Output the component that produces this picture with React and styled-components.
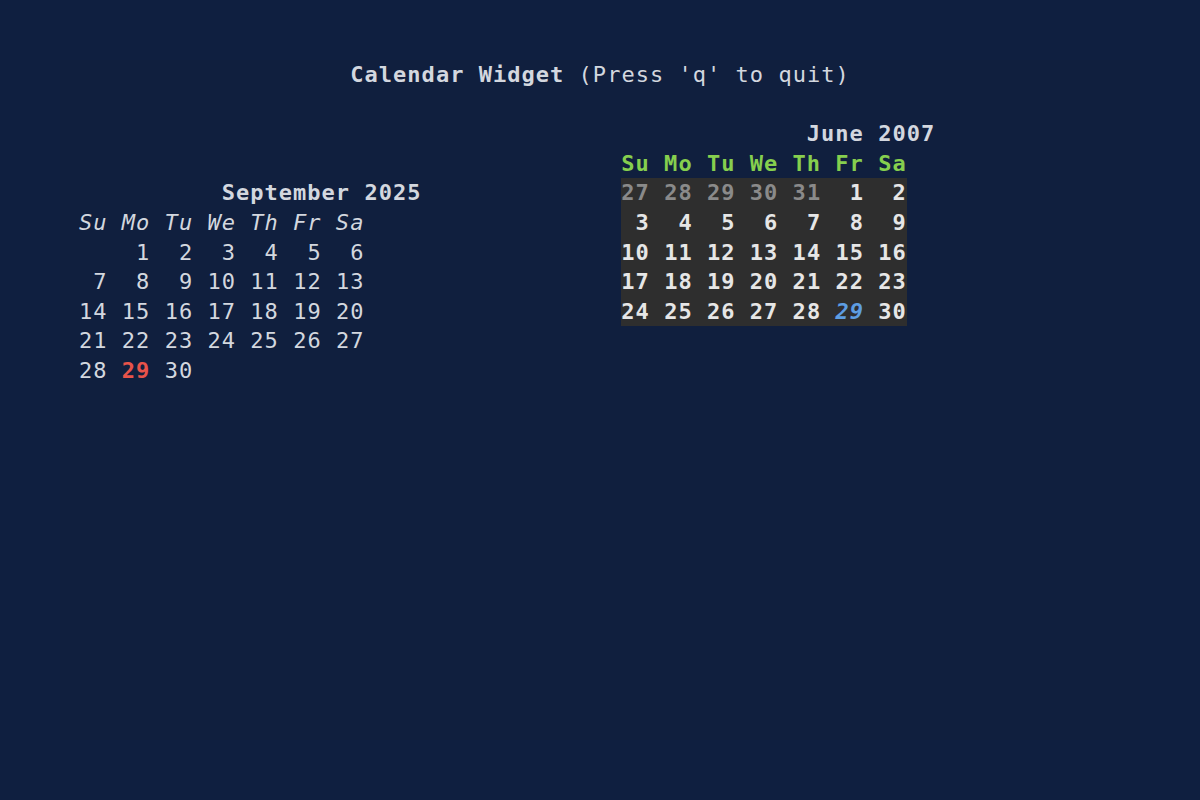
import React from 'react';
import styled, { createGlobalStyle } from 'styled-components';

const GlobalStyle = createGlobalStyle`
  html, body {
    margin: 0;
    padding: 0;
    background: #0f1f40;
  }
  body {
    font-family: "DejaVu Sans Mono", "Liberation Mono", monospace;
  }
`;

const Page = styled.div`
  width: 1200px;
  height: 800px;
  box-sizing: border-box;
  padding: 60px;
  background: #0f1f40;
`;

const Panel = styled.div`
  height: 680px;
  background: #101f3e;
  color: #d3d7df;
  font-size: 22px;
  letter-spacing: 1.025px;
  line-height: 29.6px;
  white-space: pre;
`;

const TitleLine = styled.div`
  text-align: center;
`;

const Strong = styled.span`
  font-weight: bold;
`;

const Columns = styled.div`
  display: flex;
  align-items: flex-start;
  padding-left: 19px;
  margin-top: 29.6px;
`;

const Calendar = styled.div`
  width: ${({ $width }) => $width || 'auto'};
  margin-top: ${({ $offset }) => $offset || '0'};
`;

const MonthTitle = styled.div`
  font-weight: bold;
`;

const WeekHeader = styled.div`
  font-style: ${({ $fancy }) => ($fancy ? 'normal' : 'italic')};
  font-weight: ${({ $fancy }) => ($fancy ? 'bold' : 'normal')};
  color: ${({ $fancy }) => ($fancy ? '#86cf4e' : '#d3d7df')};
`;

const Body = styled.div`
  display: inline-block;
  vertical-align: top;
  background: ${({ $fancy }) => ($fancy ? '#2e2e2e' : 'transparent')};
  font-weight: ${({ $fancy }) => ($fancy ? 'bold' : 'normal')};
  color: ${({ $fancy }) => ($fancy ? '#e6e6e6' : '#d3d7df')};
`;

const Week = styled.div``;

const tones = {
  normal: '',
  other: 'color: #8a8a8a;',
  today: 'color: #e8534a; font-weight: bold;',
  selected: 'color: #5d9de2; font-style: italic; font-weight: bold;',
};

const Day = styled.span`
  ${({ $tone }) => tones[$tone || 'normal']}
`;

const DAYS = ['Su', 'Mo', 'Tu', 'We', 'Th', 'Fr', 'Sa'];

const september = [
  [null, 1, 2, 3, 4, 5, 6],
  [7, 8, 9, 10, 11, 12, 13],
  [14, 15, 16, 17, 18, 19, 20],
  [21, 22, 23, 24, 25, 26, 27],
  [28, 29, 30],
];

const june = [
  [27, 28, 29, 30, 31, 1, 2],
  [3, 4, 5, 6, 7, 8, 9],
  [10, 11, 12, 13, 14, 15, 16],
  [17, 18, 19, 20, 21, 22, 23],
  [24, 25, 26, 27, 28, 29, 30],
];

const MonthGrid = ({ title, weeks, fancy, toneOf }) => (
  <>
    <MonthTitle>{title}</MonthTitle>
    <WeekHeader $fancy={fancy}>{DAYS.join(' ')}</WeekHeader>
    <Body $fancy={fancy}>
      {weeks.map((week, w) => (
        <Week key={w}>
          {week.map((d, i) => (
            <React.Fragment key={i}>
              {i > 0 ? ' ' : ''}
              <Day $tone={d ? toneOf(d, w) : 'normal'}>
                {d ? String(d).padStart(2, ' ') : '  '}
              </Day>
            </React.Fragment>
          ))}
        </Week>
      ))}
    </Body>
  </>
);

const App = () => (
  <Page>
    <GlobalStyle />
    <Panel>
      <TitleLine>
        <Strong>Calendar Widget</Strong> (Press 'q' to quit)
      </TitleLine>
      <Columns>
        <Calendar $width="542.3px" $offset="59.2px">
          <MonthGrid
            title={'          September 2025'}
            weeks={september}
            toneOf={(d) => (d === 29 ? 'today' : 'normal')}
          />
        </Calendar>
        <Calendar>
          <MonthGrid
            fancy
            title={'             June 2007'}
            weeks={june}
            toneOf={(d, w) => {
              if (w === 0 && d > 20) return 'other';
              if (w === 4 && d === 29) return 'selected';
              return 'normal';
            }}
          />
        </Calendar>
      </Columns>
    </Panel>
  </Page>
);

export default App;
